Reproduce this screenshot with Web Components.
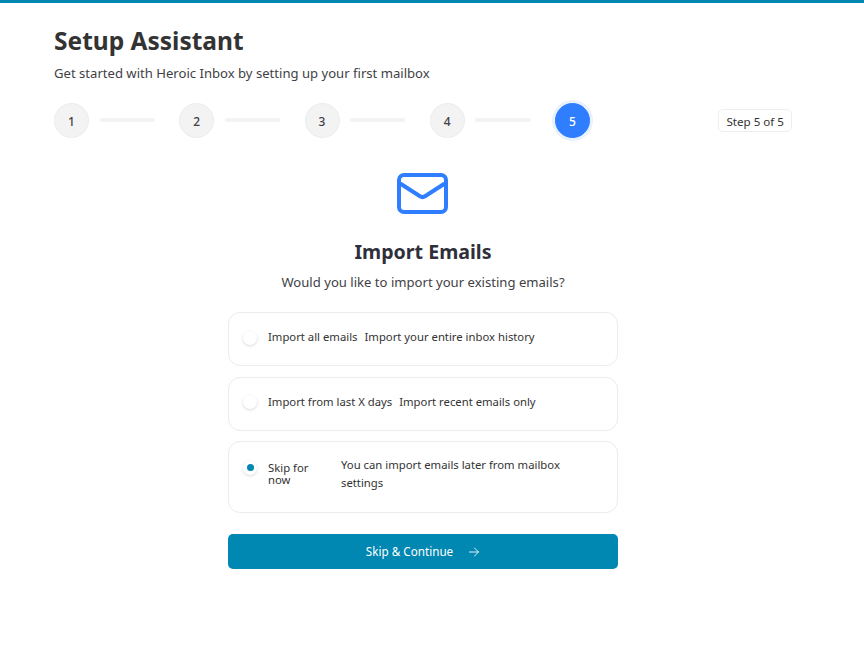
<!DOCTYPE html>
<html lang="en">
<head>
<meta charset="utf-8">
<title>Setup Assistant</title>
<style>
	html, body { margin: 0; background: #fff; }
	body { font-family: "Noto Sans", "Open Sans", sans-serif; color: #333; }
</style>
</head>
<body>
<setup-page>
	<step-bar current="5" total="5"></step-bar>
	<import-option label="Import all emails" hint="Import your entire inbox history"></import-option>
	<import-option label="Import from last X days" hint="Import recent emails only"></import-option>
	<import-option label="Skip for now" hint="You can import emails later from mailbox settings" checked></import-option>
</setup-page>
<script>
class SetupPage extends HTMLElement {
	constructor(){
		super();
		this.attachShadow({mode:"open"});
		this.shadowRoot.innerHTML = /*html*/`
			<style>
				:host {
					display: block;
					min-height: 671px;
					box-sizing: border-box;
					border-top: 3px solid #0087b2;
					padding: 0 72px 0 54px;
				}
				h1 {
					margin: 0;
					padding-top: 21px;
					font-size: 24.5px;
					line-height: 34px;
					font-weight: 700;
					color: #333;
				}
				.sub {
					margin: 5px 0 0;
					font-size: 13.1px;
					line-height: 20px;
					color: #3f3f46;
				}
				.stage {
					display: flex;
					flex-direction: column;
					align-items: center;
					padding-top: 35px;
				}
				svg.mail { display: block; width: 51px; height: 41px; margin-right: 1px; }
				h2 {
					margin: 23px 0 0;
					font-size: 19.6px;
					line-height: 30px;
					font-weight: 700;
					color: #2f2f3a;
				}
				.ask {
					margin: 4px 0 0;
					font-size: 13.1px;
					line-height: 22px;
					color: #3f3f46;
				}
				.options {
					width: 390px;
					margin-top: 19px;
					display: flex;
					flex-direction: column;
					gap: 10.5px;
				}
				button {
					width: 390px;
					height: 35px;
					margin-top: 21px;
					border: 0;
					border-radius: 5px;
					background: #0087b2;
					color: #fff;
					font: 400 11.7px "Noto Sans", "Open Sans", sans-serif;
					display: flex;
					align-items: center;
					justify-content: center;
					gap: 15px;
					padding: 0 0 1px;
				}
				button svg { width: 12px; height: 12px; display: block; margin-top: 1px; }
			</style>
			<h1>Setup Assistant</h1>
			<p class="sub">Get started with Heroic Inbox by setting up your first mailbox</p>
			<slot name="steps"></slot>
			<div class="stage">
				<svg class="mail" viewBox="0 0 51 41" fill="none" stroke="#2e7eff" stroke-width="4" stroke-linecap="round" stroke-linejoin="round">
					<rect x="2" y="2" width="47" height="37" rx="5"/>
					<path d="M4 11 23 23.3Q25.5 24.9 28 23.3L47 11"/>
				</svg>
				<h2>Import Emails</h2>
				<p class="ask">Would you like to import your existing emails?</p>
				<div class="options"><slot></slot></div>
				<button type="button">Skip &amp; Continue
					<svg viewBox="0 0 24 24" fill="none" stroke="#dff1f7" stroke-width="2" stroke-linecap="round" stroke-linejoin="round"><path d="M3 12h18M13 4l8 8-8 8"/></svg>
				</button>
			</div>
		`;
	}
	connectedCallback(){
		const bar = this.querySelector("step-bar");
		if(bar) bar.slot = "steps";
	}
}
customElements.define("setup-page",SetupPage);

class StepBar extends HTMLElement {
	constructor(){
		super();
		this.attachShadow({mode:"open"});
	}
	connectedCallback(){
		const current = parseInt(this.getAttribute("current"));
		const total = parseInt(this.getAttribute("total"));
		let steps = "";
		for(let i=1; i<=total; i++){
			steps += `<span class="dot ${i==current ? "on" : ""}">${i}</span>`;
			if(i<total) steps += `<span class="line"></span>`;
		}
		this.shadowRoot.innerHTML = /*html*/`
			<style>
				:host {
					display: flex;
					align-items: center;
					justify-content: space-between;
					margin-top: 19px;
					height: 36px;
				}
				.steps { display: flex; align-items: center; }
				.dot {
					width: 35px;
					height: 35px;
					box-sizing: border-box;
					padding-top: 2px;
					border-radius: 50%;
					background: #f3f3f4;
					border: 1px solid #ececee;
					color: #3f3f46;
					font-size: 12px;
					font-weight: 500;
					display: flex;
					align-items: center;
					justify-content: center;
				}
				.dot.on {
					background: #2e7eff;
					border-color: #2e7eff;
					color: #fff;
					box-shadow: 0 0 0 3px #e9f1ff;
				}
				.line {
					width: 55.25px;
					height: 4px;
					margin: 0 24.5px 0 10.5px;
					border-radius: 2px;
					background: #f3f3f4;
				}
				.badge {
					border: 1px solid #eeeeef;
					border-radius: 5px;
					height: 23px;
					box-sizing: border-box;
					padding: 2px 7px 0;
					display: flex;
					align-items: center;
					font-size: 11.6px;
					color: #333;
				}
			</style>
			<div class="steps">${steps}</div>
			<div class="badge">Step ${current} of ${total}</div>
		`;
	}
}
customElements.define("step-bar",StepBar);

class ImportOption extends HTMLElement {
	constructor(){
		super();
		this.attachShadow({mode:"open"});
	}
	connectedCallback(){
		this.shadowRoot.innerHTML = /*html*/`
			<style>
				:host {
					display: flex;
					box-sizing: border-box;
					min-height: 54px;
					border: 1px solid #ececee;
					border-radius: 12px;
					padding: 16px 14px;
					font-size: 11.3px;
					color: #333;
				}
				.radio {
					flex: none;
					width: 14px;
					height: 14px;
					margin: 1.5px 11px 0 0;
					border-radius: 50%;
					background: #fff;
					box-shadow: 0 1px 3px #00000026;
					display: flex;
					align-items: center;
					justify-content: center;
				}
				:host([checked]) .radio::after {
					content: "";
					width: 7px;
					height: 7px;
					border-radius: 50%;
					background: #0087b2;
				}
				.label { line-height: 12px; margin: 2px 7px 0 0; }
				.hint { line-height: 16px; }
				:host([checked]) { min-height: 72px; padding-top: 16.5px; padding-bottom: 16px; }
				:host([checked]) .radio { margin-top: 2px; }
				:host([checked]) .label { flex: 0 0 66px; box-sizing: border-box; padding-right: 18px; margin-top: 3.5px; }
				:host([checked]) .hint { line-height: 17.5px; margin-top: -2.5px; padding-right: 20px; }
			</style>
			<span class="radio"></span>
			<span class="label">${this.getAttribute("label")}</span>
			<span class="hint">${this.getAttribute("hint")}</span>
		`;
	}
}
customElements.define("import-option",ImportOption);
</script>
</body>
</html>
